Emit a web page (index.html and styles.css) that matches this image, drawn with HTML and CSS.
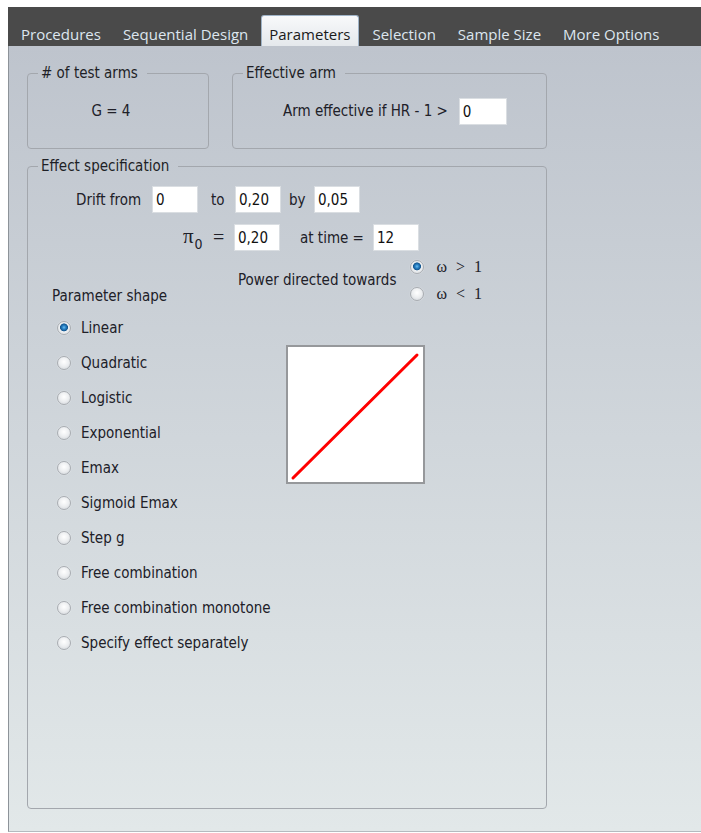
FILE: index.html
```html
<!DOCTYPE html>
<html lang="en">
<head>
<meta charset="utf-8">
<title>Parameters</title>
<link rel="stylesheet" href="styles.css">
</head>
<body>
<div class="window">
  <nav class="tabs">
    <span class="tab">Procedures</span>
    <span class="tab">Sequential Design</span>
    <span class="tab active">Parameters</span>
    <span class="tab">Selection</span>
    <span class="tab">Sample Size</span>
    <span class="tab">More Options</span>
  </nav>

  <main class="panel">
    <div class="top-row">
      <fieldset class="group arms">
        <legend># of test arms</legend>
        <div class="arms-body">G = 4</div>
      </fieldset>
      <fieldset class="group effective">
        <legend>Effective arm</legend>
        <div class="effective-body">
          <span>Arm effective if HR - 1 &gt;</span>
          <input class="field wide" type="text" value="0">
        </div>
      </fieldset>
    </div>

    <fieldset class="group effect">
      <legend>Effect specification</legend>
      <div class="effect-body">
        <div class="drift-row">
          <span class="lbl-drift">Drift from</span>
          <input class="field" type="text" value="0">
          <span class="lbl-to">to</span>
          <input class="field" type="text" value="0,20">
          <span class="lbl-by">by</span>
          <input class="field" type="text" value="0,05">
        </div>

        <div class="pi-row">
          <span class="pi">π<sub>0</sub></span>
          <span class="eq">=</span>
          <input class="field" type="text" value="0,20">
          <span class="lbl-time">at time =</span>
          <input class="field" type="text" value="12">
        </div>

        <div class="power-row">
          <span class="shape-title">Parameter shape</span>
          <span class="power-label">Power directed towards</span>
          <div class="power-options">
            <label class="option"><input class="radio" type="radio" name="power" checked><span class="omega">ω &gt; 1</span></label>
            <label class="option"><input class="radio" type="radio" name="power"><span class="omega">ω &lt; 1</span></label>
          </div>
        </div>

        <div class="shape-row">
          <div class="shape-list">
            <label class="shape"><input class="radio" type="radio" name="shape" checked><span>Linear</span></label>
            <label class="shape"><input class="radio" type="radio" name="shape"><span>Quadratic</span></label>
            <label class="shape"><input class="radio" type="radio" name="shape"><span>Logistic</span></label>
            <label class="shape"><input class="radio" type="radio" name="shape"><span>Exponential</span></label>
            <label class="shape"><input class="radio" type="radio" name="shape"><span>Emax</span></label>
            <label class="shape"><input class="radio" type="radio" name="shape"><span>Sigmoid Emax</span></label>
            <label class="shape"><input class="radio" type="radio" name="shape"><span>Step g</span></label>
            <label class="shape"><input class="radio" type="radio" name="shape"><span>Free combination</span></label>
            <label class="shape"><input class="radio" type="radio" name="shape"><span>Free combination monotone</span></label>
            <label class="shape"><input class="radio" type="radio" name="shape"><span>Specify effect separately</span></label>
          </div>
          <div class="preview">
            <svg width="135" height="135" viewBox="0 0 135 135">
              <line x1="5" y1="131" x2="129" y2="8" stroke="#ff0000" stroke-width="3" stroke-linecap="round"/>
            </svg>
          </div>
        </div>
      </div>
    </fieldset>
  </main>
</div>
</body>
</html>
```

FILE: styles.css
```css
body {
  margin: 0;
  background: #ffffff;
  font-family: "DejaVu Sans Condensed", "Liberation Sans", sans-serif;
  font-size: 15px;
  color: #202028;
}

.window {
  margin: 7px 0 0 8px;
  width: 693px;
}

/* tab strip */
.tabs {
  display: flex;
  align-items: flex-end;
  height: 39px;
  box-sizing: border-box;
  padding-left: 2px;
  background: #4a4a4a;
}

.tab {
  height: 31px;
  box-sizing: border-box;
  padding: 6px 11px 0;
  display: flex;
  align-items: center;
  font-family: "Open Sans", sans-serif;
  font-size: 15px;
  color: #dde6ef;
  white-space: nowrap;
}

.tab.active {
  margin: 0 2px;
  padding: 5px 8px 0 7px;
  background: linear-gradient(#f8f9fb, #e4e8ec);
  border: 1px solid #9fb3c7;
  border-bottom: none;
  border-radius: 3px 3px 0 0;
  color: #1b1b1b;
}

/* page body */
.panel {
  height: 786px;
  box-sizing: border-box;
  padding: 18px 0 0 18px;
  background: linear-gradient(#bec4cd, #e2e8e9);
  border-left: 1px solid #8d9399;
  border-bottom: 1px solid #b4babf;
}

fieldset.group {
  margin: 0;
  padding: 0;
  min-width: 0;
  box-sizing: border-box;
  border: 1px solid #a3a7ad;
  border-radius: 4px;
}

fieldset.group legend {
  margin-left: 10px;
  padding: 0 9px 0 3px;
  line-height: 18px;
  color: #1e1f26;
}

.top-row {
  display: flex;
  gap: 23px;
}

.arms {
  width: 182px;
}

.arms-body {
  height: 66px;
  box-sizing: border-box;
  padding: 20px 14px 0 0;
  line-height: 18px;
  text-align: center;
}

.effective {
  width: 315px;
}

.effective-body {
  height: 66px;
  box-sizing: border-box;
  padding: 16px 0 0 50px;
  display: flex;
  align-items: flex-start;
  gap: 11px;
}

.effective-body span {
  line-height: 27px;
}

.field {
  width: 46px;
  height: 27px;
  box-sizing: border-box;
  margin: 0;
  padding: 0 3px;
  border: 1px solid #dadee2;
  background: #ffffff;
  font: inherit;
  color: #111111;
  outline: none;
}

.field.wide {
  width: 48px;
}

/* effect specification */
fieldset.effect {
  margin-top: 8px;
  width: 520px;
}

.effect-body {
  height: 633px;
  box-sizing: border-box;
  padding-top: 11px;
}

.drift-row {
  display: flex;
  align-items: center;
  height: 27px;
  margin-left: 48px;
}

.lbl-drift {
  width: 76px;
}

.lbl-to {
  width: 37px;
  padding-left: 13px;
  box-sizing: border-box;
}

.lbl-by {
  width: 33px;
  padding-left: 8px;
  box-sizing: border-box;
}

.pi-row {
  display: flex;
  align-items: center;
  height: 27px;
  margin: 11px 0 0 155px;
}

.pi {
  width: 30px;
  font-family: "Liberation Serif", serif;
  font-size: 21px;
  line-height: 27px;
  position: relative;
  top: -1px;
}

.pi sub {
  font-family: "DejaVu Sans Condensed", "Liberation Sans", sans-serif;
  font-size: 14px;
  line-height: 0;
  vertical-align: -6px;
  margin-left: 1px;
}

.eq {
  width: 21px;
  font-family: "Liberation Serif", serif;
  font-size: 20px;
  line-height: 27px;
}

.lbl-time {
  width: 93px;
  padding-left: 20px;
  box-sizing: border-box;
}

.power-row {
  display: grid;
  grid-template-columns: 186px max-content max-content;
  justify-content: start;
  margin: 2px 0 0 24px;
}

.shape-title {
  align-self: end;
  line-height: 22px;
}

.power-label {
  align-self: center;
  padding-right: 14px;
}

.power-options {
  display: flex;
  flex-direction: column;
}

.option {
  display: flex;
  align-items: center;
  gap: 12px;
  height: 27px;
}

.omega {
  font-family: "Liberation Serif", serif;
  font-size: 16px;
  word-spacing: 5px;
}

.radio {
  appearance: none;
  -webkit-appearance: none;
  flex: none;
  margin: 0;
  width: 14px;
  height: 14px;
  border-radius: 50%;
  border: 1px solid #a9adb2;
  background: radial-gradient(circle at 50% 40%, #ffffff 0, #eceef0 50%, #cdd1d6 100%);
  box-shadow: 0 0 1px rgba(255, 255, 255, 0.8);
}

.radio:checked {
  background: radial-gradient(circle at 50% 45%, #6cc0f0 0, #2a82c6 1.8px, #12568f 3.6px, #eef0f2 4.3px, #d4d8dc 100%);
}

.shape-row {
  display: flex;
  margin: 3px 0 0 24px;
}

.shape-list {
  width: 234px;
  display: flex;
  flex-direction: column;
}

.shape {
  display: flex;
  align-items: center;
  gap: 10px;
  height: 35px;
  padding-left: 5px;
}

.preview {
  margin-top: 35px;
  width: 139px;
  height: 139px;
  box-sizing: border-box;
  border: 2px solid #96989b;
  background: #ffffff;
}

.preview svg {
  display: block;
}
```
